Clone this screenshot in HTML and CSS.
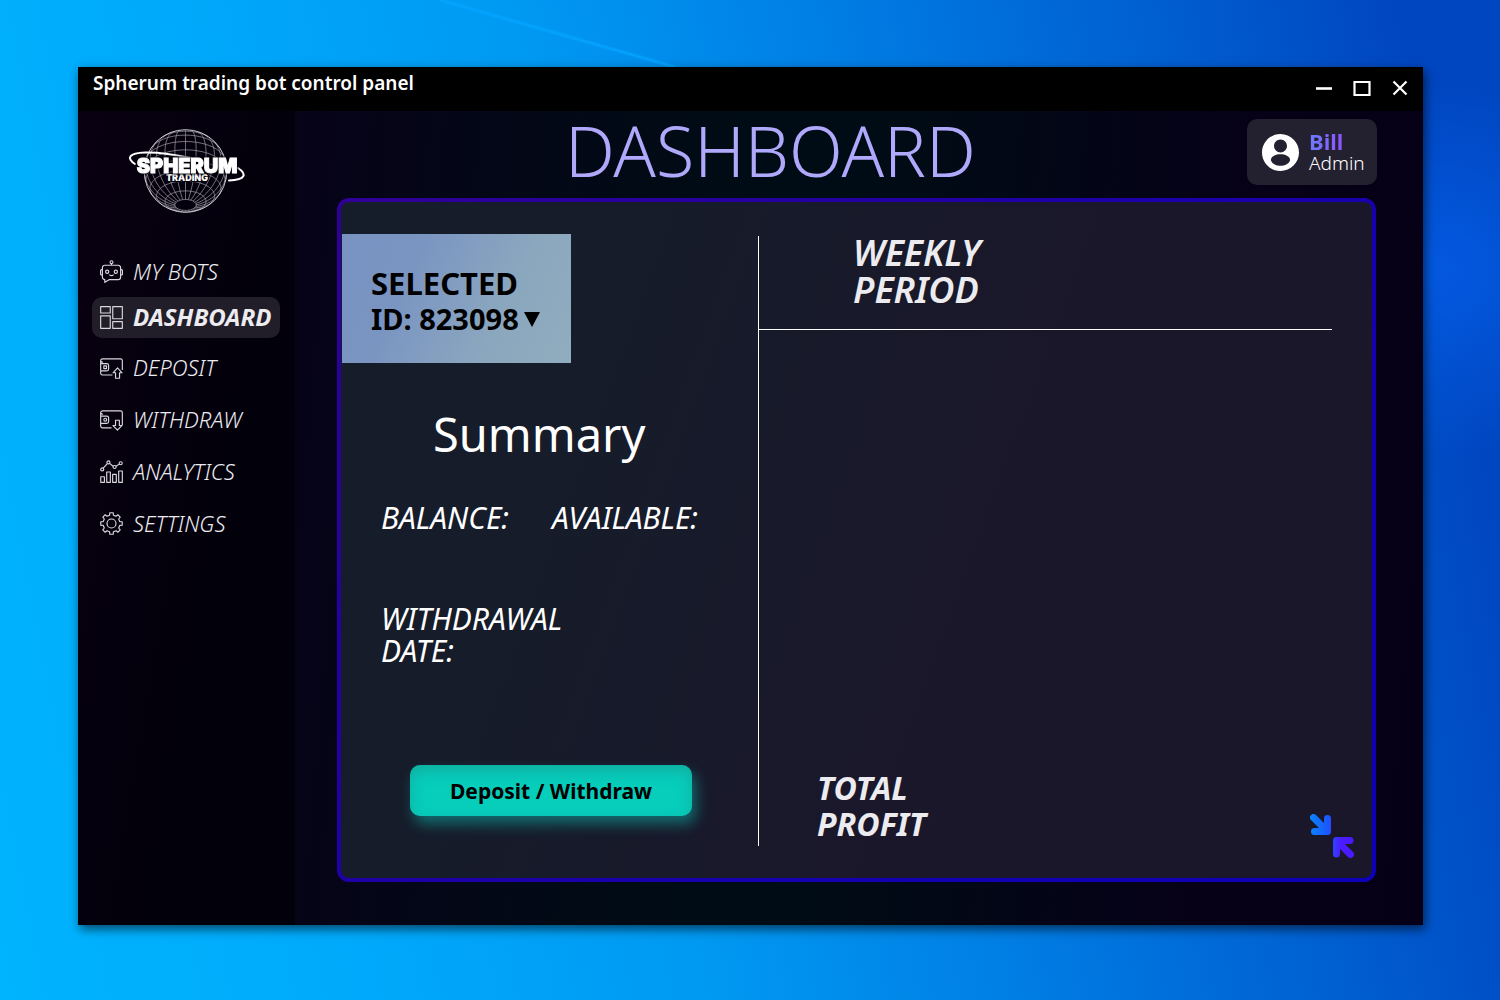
FILE: index.html
```html
<!DOCTYPE html>
<html lang="en">
<head>
<meta charset="utf-8">
<meta name="viewport" content="width=device-width, initial-scale=1">
<title>Spherum trading bot control panel</title>
<link rel="stylesheet" href="styles.css">
</head>
<body>
<div class="window">
  <header class="titlebar">
    <span class="titlebar-text">Spherum trading bot control panel</span>
    <div class="window-controls">
      <button type="button" aria-label="Minimize"><svg width="18" height="18" viewBox="0 0 18 18"><path d="M1 9.5h16" stroke-width="2.6"/></svg></button>
      <button type="button" aria-label="Maximize"><svg width="18" height="18" viewBox="0 0 18 18"><path d="M1.5 3h15v13h-15z" stroke-width="2.2"/></svg></button>
      <button type="button" aria-label="Close"><svg width="18" height="18" viewBox="0 0 18 18"><path d="M2.500 2.500l13 13M15.500 2.500l-13 13" stroke-width="2.200"/></svg></button>
    </div>
  </header>
  <div class="body">
    <aside class="sidebar">
      <svg class="logo" viewBox="0 0 120 88" role="img" aria-label="Spherum Trading">
        <path id="globe" class="globe" d=""/>
        <circle class="globe-edge" cx="58.500" cy="44" r="41.300"/>
        <path class="orbit" d="M8 37C-1 31 2 26 18 25.500C34 25 50 28 64 31"/>
        <path class="orbit" d="M111 41C120 47 119 53 102 53.500"/>
        <text class="logo-sub" x="60" y="54">TRADING</text>
        <text class="logo-name" x="60" y="46">SPHERUM</text>
      </svg>
      <nav class="nav">
        <a href="#bots"><svg viewBox="0 0 24 24"><path d="M12 5.500V3.800M5 5.500h14a2.500 2.500 0 0 1 2.500 2.500v10a2.500 2.500 0 0 1-2.500 2.500H9.500L5 23.300v-2.800a2.500 2.500 0 0 1-2.500-2.500V8A2.500 2.500 0 0 1 5 5.500zM2.500 10H1.600a1 1 0 0 0-1 1v3.500a1 1 0 0 0 1 1h.9M21.500 10h.9a1 1 0 0 1 1 1v3.500a1 1 0 0 1-1 1h-.9M9.700 15.300q2.300 2.200 4.600 0"/><circle cx="12" cy="2.300" r="1.500"/><circle cx="7.500" cy="12.200" r="1.700"/><circle cx="16.500" cy="12.200" r="1.700"/></svg>MY BOTS</a>
        <a href="#dashboard" class="active" aria-current="page"><svg viewBox="0 0 24 24"><path d="M.7.700h10v6.600h-10zM13.300.700h10v12.600h-10zM.7 10.300h10v13h-10zM13.300 16.300h10v7h-10z"/></svg>DASHBOARD</a>
        <a href="#deposit"><svg viewBox="0 0 24 24"><path d="M13 19.800H2.700A2 2 0 0 1 .7 17.800V5a2 2 0 0 1 2-2h18.600a2 2 0 0 1 2 2v9.500M.7 5.500q1 1 2.500 1M1 8h6q2 0 2 2v3.500q0 2-2 2H1M4 10.300h2.800v2.800H4zM18.300 12.500l4.700 5h-2.600v5.700h-4.200v-5.700h-2.600z"/></svg>DEPOSIT</a>
        <a href="#withdraw"><svg viewBox="0 0 24 24"><path d="M12 20.800H2.700A2 2 0 0 1 .7 18.800V5a2 2 0 0 1 2-2h18.600a2 2 0 0 1 2 2v13M.7 5.500q1 1 2.500 1M1 8.500h6q2 0 2 2V14q0 2-2 2H1M16.200 12.800h4v5.500h2.600l-4.600 4.800-4.600-4.800h2.600z"/><circle cx="5.500" cy="12.200" r="1.500"/></svg>WITHDRAW</a>
        <a href="#analytics"><svg viewBox="0 0 24 24"><path d="M.8 17.500h3.800v5.800H.8zM7 12.500h3.800v10.800H7zM13.200 15h3.800v8.300h-3.800zM19.500 11.500h3.800v11.800h-3.800zM3.400 8.500l4-4.500M10.300 3.800l3.400 2.700M16.700 6.500l3.400-2.200"/><circle cx="2.300" cy="9.800" r="1.600"/><circle cx="8.800" cy="2.500" r="1.600"/><circle cx="15.200" cy="7.300" r="1.600"/><circle cx="21.600" cy="3.400" r="1.600"/></svg>ANALYTICS</a>
        <a href="#settings"><svg viewBox="0 0 24 24"><path d="M10 3.400L10.200.8H13.800L14 3.400L16.700 4.500L18.600 2.900L21.100 5.400L19.500 7.300L20.600 10L23.200 10.200V13.800L20.600 14L19.500 16.700L21.100 18.600L18.600 21.100L16.700 19.500L14 20.600L13.800 23.200H10.200L10 20.600L7.300 19.500L5.400 21.100L2.900 18.600L4.500 16.700L3.400 14L.8 13.800V10.200L3.400 10L4.500 7.300L2.900 5.400L5.400 2.900L7.300 4.500z"/><circle cx="12" cy="12" r="4.700"/></svg>SETTINGS</a>
      </nav>
    </aside>
    <main class="main">
      <div class="topbar">
        <h1>DASHBOARD</h1>
        <div class="user">
          <svg viewBox="2 2 20 20" class="avatar"><path d="M12 2C6.480 2 2 6.480 2 12s4.480 10 10 10 10-4.480 10-10S17.520 2 12 2zm0 3c1.930 0 3.500 1.570 3.500 3.500S13.930 12 12 12s-3.500-1.570-3.500-3.500S10.070 5 12 5zm0 14.200c-2.030 0-4.430-.820-5.140-2.880C6.550 14.200 9.500 13 12 13s5.450 1.200 5.140 3.320C16.430 18.380 14.030 19.200 12 19.200z"/></svg>
          <div class="user-text">
            <strong>Bill</strong>
            <span>Admin</span>
          </div>
        </div>
      </div>
      <div class="panel">
        <section class="account">
          <div class="bot-select">
            <label for="bot">SELECTED</label>
            <div class="bot-row">
              <select id="bot"><option>ID: 823098</option></select>
              <svg width="16" height="15" viewBox="0 0 16 15"><path d="M0 0h16L8 15z"/></svg>
            </div>
          </div>
          <h2>Summary</h2>
          <div class="figures">
            <span>BALANCE:</span>
            <span>AVAILABLE:</span>
            <span class="wide">WITHDRAWAL<br>DATE:</span>
          </div>
          <button type="button" class="action">Deposit / Withdraw</button>
        </section>
        <section class="stats">
          <div class="period"><h3>WEEKLY<br>PERIOD</h3></div>
          <h3 class="profit">TOTAL<br>PROFIT</h3>
        </section>
        <button type="button" class="shrink" aria-label="Collapse panel">
          <svg width="44" height="44" viewBox="0 0 44 44">
            <defs><linearGradient id="ink" gradientUnits="userSpaceOnUse" x1="0" y1="0" x2="44" y2="0"><stop offset="0" stop-color="#0a84ff"/><stop offset=".4" stop-color="#1a58ff"/><stop offset=".5" stop-color="#2c48ff"/><stop offset=".7" stop-color="#4a1cff"/><stop offset="1" stop-color="#4a18ff"/></linearGradient></defs>
            <path d="M3.500 3.500L16 16M17.500 4.500v13H4.500"/>
            <path d="M40.500 40.500L28 28M26.500 40V26.500h13.500"/>
          </svg>
        </button>
      </div>
    </main>
  </div>
</div>
<script src="globe.js"></script>
</body>
</html>
```
FILE: styles.css
```css
* { box-sizing: border-box; }

body {
  margin: 0;
  min-height: 100vh;
  padding: 67px 77px 75px 78px;
  display: flex;
  font-family: "Noto Sans", "Open Sans", sans-serif;
  color: #fff;
  background:
    linear-gradient(to top right, transparent 48%, #04a4ff 50%, transparent 52%) 440px 0 / 235px 67px no-repeat,
    radial-gradient(circle at 96% 27%, #0459e0 0, rgba(4, 89, 224, 0) 190px),
    linear-gradient(79deg, #00b4fe 0, #00a9fb 22%, #0099f2 42%, #007ee4 60%, #005ed0 80%, #0046c0 94%);
}

button {
  font: inherit;
  border: 0;
  padding: 0;
  background: none;
  cursor: pointer;
}

h1, h2, h3 { margin: 0; }

.window {
  flex: 1;
  display: flex;
  flex-direction: column;
  background: #000;
  box-shadow: 2px 4px 10px rgba(0, 0, 0, .6);
}

.titlebar {
  height: 44px;
  padding: 0 14px 2px 15px;
  display: flex;
  justify-content: space-between;
}

.titlebar-text {
  font-size: 19px;
  font-weight: 600;
  line-height: 32px;
}

.window-controls {
  display: flex;
  align-items: center;
  gap: 20px;
}

.window-controls svg {
  display: block;
  fill: none;
  stroke: #fff;
}

.body {
  flex: 1;
  display: flex;
}

.sidebar {
  flex: 0 0 217px;
  padding: 16px 15px 16px 14px;
  background: linear-gradient(100deg, #090011, #02000b 60%, #02010b);
}

.logo {
  display: block;
  width: 120px;
  height: 88px;
  margin: 0 0 36px 35px;
}

.logo path, .logo circle { fill: none; }
.globe { stroke: #a3a2ab; stroke-width: .7; }
.globe-edge { stroke: #c9c8ce; stroke-width: 1; }
.orbit { stroke: #fff; stroke-width: 2; stroke-linecap: round; }

.logo-name, .logo-sub {
  font-family: Inter, "Noto Sans", sans-serif;
  font-weight: 900;
  text-anchor: middle;
  fill: #fff;
}

.logo-name {
  font-size: 20px;
  stroke: #fff;
  stroke-width: 1px;
  filter: drop-shadow(0 0 1px #02000b) drop-shadow(0 0 1px #02000b);
}

.logo-sub {
  font-size: 9px;
  stroke: #02000b;
  stroke-width: 2px;
  paint-order: stroke;
}

.nav {
  display: flex;
  flex-direction: column;
  gap: 11px;
}

.nav a {
  height: 41px;
  padding: 0 8px 2px;
  display: flex;
  align-items: center;
  gap: 10px;
  border-radius: 10px;
  font-size: 22px;
  font-style: italic;
  font-weight: 300;
  line-height: 38px;
  color: #ececf0;
  text-decoration: none;
}

.nav .active {
  margin: -6px 0 -2px;
  font-size: 24px;
  font-weight: 700;
  background: #211d29;
}

.nav svg {
  flex: none;
  width: 23px;
  height: 23px;
  margin-top: 2px;
  fill: none;
  stroke: #d8d8de;
  stroke-width: 1.2;
  stroke-linejoin: round;
}

.main {
  flex: 1;
  padding: 8px 46px 43px 42px;
  display: flex;
  flex-direction: column;
  gap: 13px;
  background: linear-gradient(95deg, #070318 0, #000c15 38%, #000c15 48%, #060117 80%, #060016 100%);
}

.topbar {
  display: flex;
  justify-content: space-between;
  padding-left: 228px;
}

h1 {
  font-size: 70px;
  font-weight: 300;
  line-height: 62px;
  color: #b0a8fb;
}

.user {
  display: flex;
  align-items: center;
  gap: 10px;
  width: 130px;
  height: 66px;
  padding: 0 0 0 15px;
  border-radius: 10px;
  background: #23202f;
}

.avatar {
  width: 37px;
  height: 37px;
  fill: #fff;
}

.user-text {
  display: flex;
  flex-direction: column;
  align-items: flex-start;
  line-height: 22px;
}

.user-text strong {
  font-size: 22px;
  background: linear-gradient(90deg, #6b7cff, #9152ff);
  -webkit-background-clip: text;
  background-clip: text;
  color: transparent;
}

.user-text span {
  font-size: 19px;
  font-weight: 300;
}

.panel {
  position: relative;
  flex: 1;
  display: grid;
  grid-template-columns: 417px 1fr;
  margin-right: 1px;
  border: 4px solid transparent;
  border-radius: 12px;
  background:
    linear-gradient(110deg, #161d2a 0, #161c2a 25%, #1a172a 60%, #1b172b 100%) padding-box,
    linear-gradient(135deg, #2f0096, #1200b4 75%, #0d00b8) border-box;
}

.account {
  padding: 32px 0 62px 1px;
  display: flex;
  flex-direction: column;
  align-items: flex-start;
}

.bot-select {
  width: 229px;
  height: 129px;
  padding: 32px 0 0 29px;
  font-size: 31px;
  font-weight: 700;
  line-height: 35px;
  color: #000;
  background: linear-gradient(115deg, #7892c2 0, #7b95c2 30%, #8ba7be 68%, #90acbe 100%);
}

.bot-select label { display: block; }

.bot-row {
  display: flex;
  align-items: center;
  gap: 5px;
  font-size: 29px;
}

.bot-row svg { margin-top: 2px; }

.bot-row select {
  appearance: none;
  border: 0;
  padding: 0;
  height: 35px;
  font: inherit;
  color: inherit;
  background: none;
}

h2 {
  margin: 43px 0 40px 91px;
  font-size: 47px;
  font-weight: 400;
  line-height: 56px;
}

.figures {
  margin-left: 39px;
  display: grid;
  grid-template-columns: 171px auto;
  row-gap: 69px;
  font-size: 30px;
  font-style: italic;
  line-height: 32px;
}

.figures .wide { grid-column: 1 / -1; }

.action {
  width: 282px;
  height: 51px;
  margin: auto 0 0 68px;
  border-radius: 10px;
  font-size: 21px;
  font-weight: 700;
  color: #000;
  background: #07cdbb;
  box-shadow: 4px 8px 14px rgba(12, 205, 190, .45), inset 0 6px 14px rgba(30, 130, 120, .4);
}

.stats {
  margin: 34px 40px 32px 0;
  display: flex;
  flex-direction: column;
  justify-content: space-between;
  border-left: 1px solid #fff;
}

.stats h3 {
  font-style: italic;
  color: #ececf0;
}

.period {
  height: 94px;
  padding-left: 94px;
  border-bottom: 1px solid #fff;
}

.period h3 {
  margin-top: -2px;
  font-size: 36px;
  font-weight: 600;
  line-height: 37px;
}

.stats .profit {
  padding: 0 0 4px 58px;
  font-size: 32px;
  line-height: 36px;
}

.shrink {
  position: absolute;
  right: 18px;
  bottom: 20px;
}

.shrink svg {
  display: block;
  fill: none;
  stroke: url(#ink);
  stroke-width: 7;
  stroke-linecap: round;
  stroke-linejoin: round;
}
```
FILE: globe.js
```js
// Draws the wireframe globe of the logo: an orthographic sphere, lower pole tipped towards the viewer.
const R = 41, CX = 58.5, CY = 44, TILT = 31 * Math.PI / 180;

function project(lat, lon) {
  const x = Math.cos(lat) * Math.sin(lon);
  const y = Math.sin(lat);
  const z = Math.cos(lat) * Math.cos(lon);
  return [
    CX + R * x,
    CY + R * (y * Math.cos(TILT) - z * Math.sin(TILT)),
    y * Math.sin(TILT) + z * Math.cos(TILT)
  ];
}

function trace(points) {
  let d = "", pen = false;
  for (const [x, y, z] of points) {
    if (z < 0) { pen = false; continue; }
    d += (pen ? "L" : "M") + x.toFixed(1) + " " + y.toFixed(1);
    pen = true;
  }
  return d;
}

const rad = Math.PI / 180;
let path = "";
for (let lat = -60; lat <= 75; lat += 15) {
  const ring = [];
  for (let lon = 0; lon <= 360; lon += 4) ring.push(project(lat * rad, lon * rad));
  path += trace(ring);
}
for (let lon = 0; lon < 360; lon += 15) {
  const line = [];
  for (let lat = -75; lat <= 75; lat += 3) line.push(project(lat * rad, lon * rad));
  path += trace(line);
}
document.getElementById("globe").setAttribute("d", path);
```
